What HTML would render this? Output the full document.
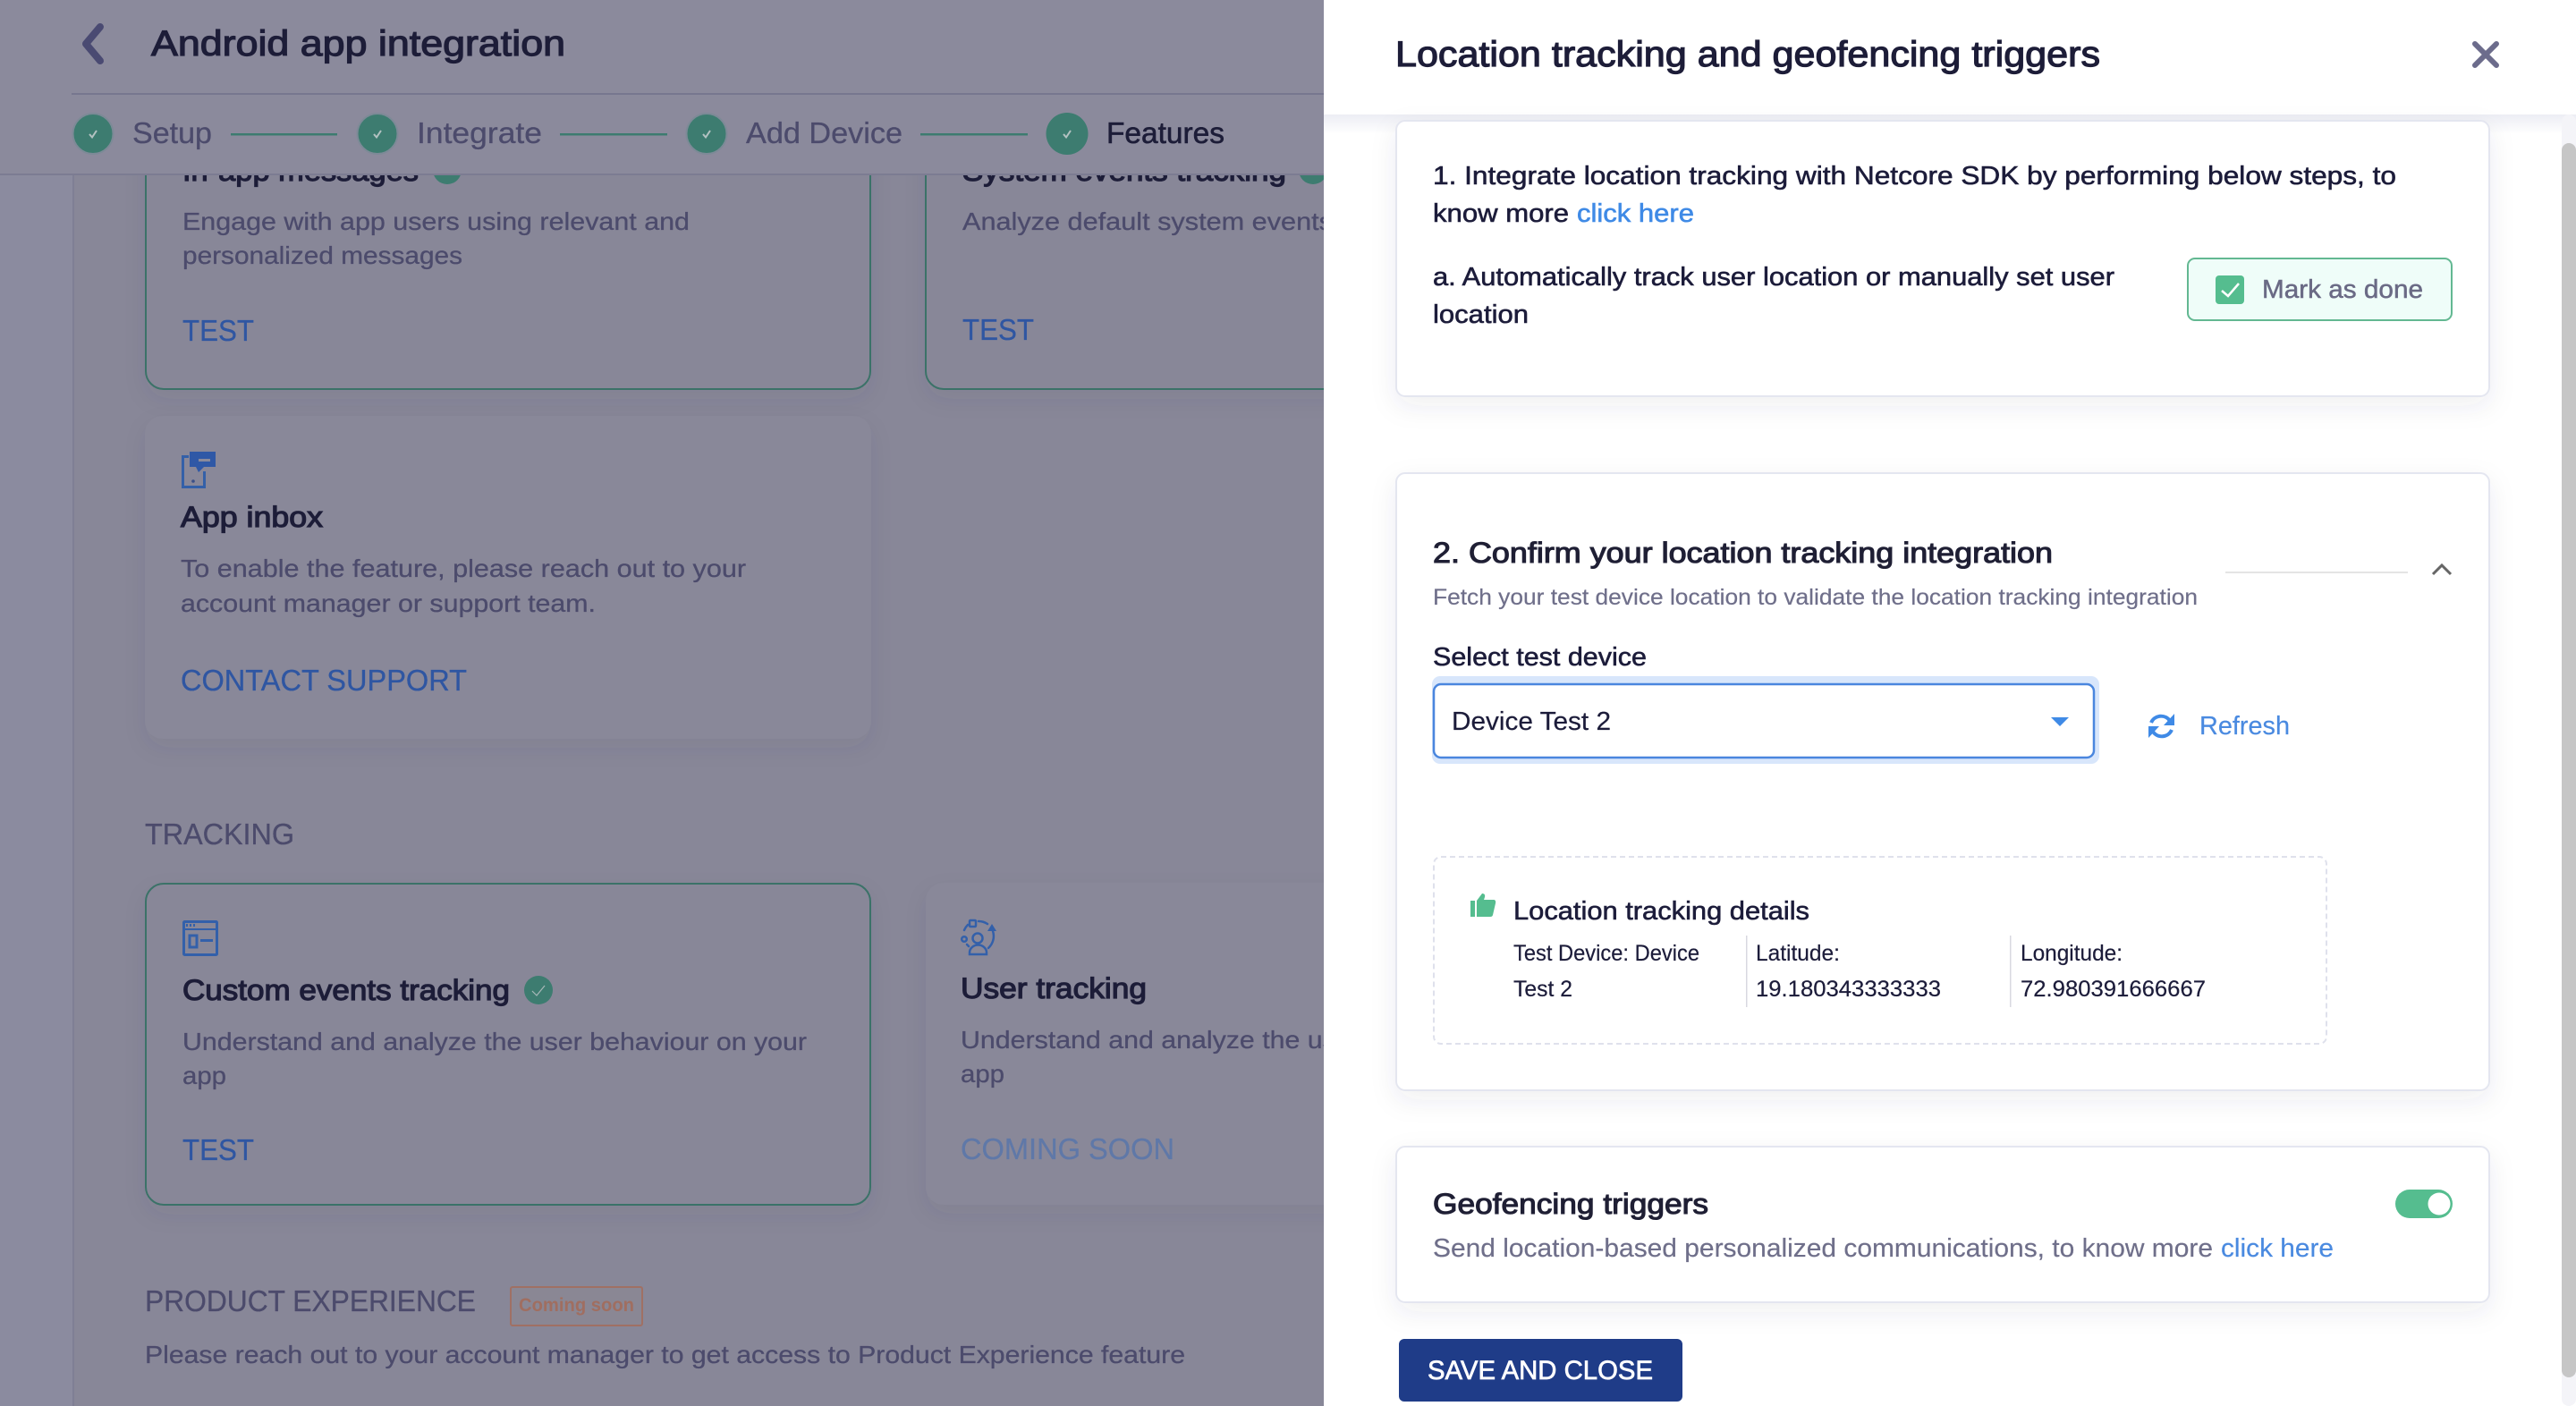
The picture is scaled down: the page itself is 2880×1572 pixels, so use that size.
<!DOCTYPE html>
<html><head><meta charset="utf-8">
<style>
html,body{margin:0;padding:0;width:2880px;height:1572px;overflow:hidden;background:#888798}
svg{display:block}
text{font-family:"Liberation Sans",sans-serif}
.h{font-size:28px;fill:#4c4b6c;stroke:#4c4b6c;stroke-width:.3px}
.t{font-size:32px;fill:#1d1d38;stroke:#1d1d38;stroke-width:1.2px}
.l{font-size:33px;fill:#2f56a2;stroke:#2f56a2;stroke-width:.3px}
.s{font-size:33px;fill:#4c4b6c;stroke:#4c4b6c;stroke-width:.3px}
.d{font-size:29px;fill:#1c1c3a;stroke:#1c1c3a;stroke-width:.6px}
.g{fill:#6f6f8a;stroke:#6f6f8a;stroke-width:.2px}
</style></head><body>
<svg width="2880" height="1572" viewBox="0 0 2880 1572" xmlns="http://www.w3.org/2000/svg">
<defs>
<filter id="sh" x="-10%" y="-10%" width="120%" height="130%"><feDropShadow dx="0" dy="10" stdDeviation="12" flood-color="#3a3a55" flood-opacity=".08"/></filter>
<filter id="sw" x="-10%" y="-10%" width="120%" height="130%"><feDropShadow dx="0" dy="10" stdDeviation="14" flood-color="#30305a" flood-opacity=".08"/></filter>
<linearGradient id="hg" x1="0" y1="0" x2="0" y2="1"><stop offset="0" stop-color="#ecedf4"/><stop offset="1" stop-color="#fff"/></linearGradient>
</defs>

<!-- left background -->
<rect width="1480" height="1572" fill="#888798"/>
<rect width="81" height="1572" fill="#8b8b9f"/>
<rect x="81" width="2" height="1572" fill="#7f7f95"/>

<!-- cards -->
<rect x="163" y="40" width="810" height="395" rx="20" fill="#888798" stroke="#3a7268" stroke-width="2" filter="url(#sh)"/>
<rect x="1035" y="40" width="810" height="395" rx="20" fill="#888798" stroke="#3a7268" stroke-width="2" filter="url(#sh)"/>
<text x="204" y="202" class="t" textLength="264" lengthAdjust="spacingAndGlyphs">In-app messages</text>
<circle cx="500" cy="190" r="16" fill="#3d7c70"/>
<text x="1076" y="202" class="t" textLength="362" lengthAdjust="spacingAndGlyphs">System events tracking</text>
<circle cx="1468" cy="190" r="16" fill="#3d7c70"/>
<text x="204" y="257" class="h" textLength="567" lengthAdjust="spacingAndGlyphs">Engage with app users using relevant and</text>
<text x="204" y="295" class="h" textLength="313" lengthAdjust="spacingAndGlyphs">personalized messages</text>
<text x="204" y="381" class="l" textLength="80" lengthAdjust="spacingAndGlyphs">TEST</text>
<text x="1076" y="257" class="h" textLength="414" lengthAdjust="spacingAndGlyphs">Analyze default system events</text>
<text x="1076" y="380" class="l" textLength="80" lengthAdjust="spacingAndGlyphs">TEST</text>

<rect x="162" y="465" width="812" height="361" rx="20" fill="#898899" filter="url(#sh)"/>
<path d="M211 510.500H204.500V544.500H228.500V527" fill="none" stroke="#3460a8" stroke-width="3"/>
<path d="M212 505H241V522H228L222 528L219 522H212Z" fill="#2f58a6"/>
<rect x="222" y="513" width="13" height="3" fill="#8a8a9b"/>
<circle cx="216" cy="538" r="1.800" fill="#3a4f88"/>
<text x="202" y="589" class="t" textLength="159" lengthAdjust="spacingAndGlyphs">App inbox</text>
<text x="202" y="645" class="h" textLength="632" lengthAdjust="spacingAndGlyphs">To enable the feature, please reach out to your</text>
<text x="202" y="684" class="h" textLength="464" lengthAdjust="spacingAndGlyphs">account manager or support team.</text>
<text x="202" y="772" class="l" textLength="320" lengthAdjust="spacingAndGlyphs">CONTACT SUPPORT</text>

<text x="162" y="944" class="s" textLength="167" lengthAdjust="spacingAndGlyphs">TRACKING</text>

<rect x="163" y="988" width="810" height="359" rx="20" fill="#888798" stroke="#3a7268" stroke-width="2" filter="url(#sh)"/>
<g fill="none" stroke="#3360aa" stroke-width="3">
<rect x="205.500" y="1030.500" width="37" height="37" rx="1"/>
<path d="M205 1039H243" stroke-width="2"/>
<path d="M208 1034.500H218" stroke-dasharray="2 2" stroke-width="3"/>
<rect x="212" y="1046" width="8" height="13"/>
<path d="M224 1051.500H238"/>
</g>
<text x="204" y="1118" class="t" textLength="366" lengthAdjust="spacingAndGlyphs">Custom events tracking</text>
<circle cx="602" cy="1107" r="16" fill="#3d7c70"/>
<path d="M595 1108L600 1113L609 1102" fill="none" stroke="#a8b8b8" stroke-width="1.200"/>
<text x="204" y="1174" class="h" textLength="698" lengthAdjust="spacingAndGlyphs">Understand and analyze the user behaviour on your</text>
<text x="204" y="1212" class="h" textLength="49" lengthAdjust="spacingAndGlyphs">app</text>
<text x="204" y="1297" class="l" textLength="80" lengthAdjust="spacingAndGlyphs">TEST</text>

<rect x="1035" y="987" width="810" height="360" rx="20" fill="#898899" filter="url(#sh)"/>
<g fill="none" stroke="#3360aa" stroke-width="2.500" stroke-linecap="round">
<path d="M1094 1030A18 18 0 0 1 1104 1033M1110 1041A18 18 0 0 1 1105 1060M1078 1040A18 18 0 0 1 1082 1034M1081 1056L1083 1058"/>
<circle cx="1093" cy="1049" r="5.500"/>
<path d="M1084 1067V1065A9 8 0 0 1 1103 1065V1067Z"/>
<rect x="1084" y="1029" width="7" height="7" rx="1"/>
<circle cx="1078" cy="1050" r="2.800"/>
</g>
<path d="M1109 1033L1114 1041H1104Z" fill="#3360aa"/>
<text x="1074" y="1116" class="t" textLength="208" lengthAdjust="spacingAndGlyphs">User tracking</text>
<text x="1074" y="1172" class="h" textLength="698" lengthAdjust="spacingAndGlyphs">Understand and analyze the user behaviour on your</text>
<text x="1074" y="1210" class="h" textLength="49" lengthAdjust="spacingAndGlyphs">app</text>
<text x="1074" y="1296" class="l" style="fill:#5f78a8;stroke:#5f78a8" textLength="239" lengthAdjust="spacingAndGlyphs">COMING SOON</text>

<text x="162" y="1466" class="s" textLength="370" lengthAdjust="spacingAndGlyphs">PRODUCT EXPERIENCE</text>
<rect x="571" y="1439" width="147" height="43" rx="2" fill="#8a8794" stroke="#a07064" stroke-width="2"/>
<text x="580" y="1466" font-size="21" font-weight="bold" fill="#a06e60" textLength="129" lengthAdjust="spacingAndGlyphs">Coming soon</text>
<text x="162" y="1524" class="h" textLength="1163" lengthAdjust="spacingAndGlyphs">Please reach out to your account manager to get access to Product Experience feature</text>

<!-- left header -->
<rect x="0" y="0" width="1480" height="194" fill="#8b8a9c"/>
<rect x="80" y="104" width="1400" height="2" fill="#77778f"/>
<rect x="0" y="194" width="1480" height="2" fill="#7c7c92"/>
<path d="M112 30L96 49L112 68" fill="none" stroke="#4a4a72" stroke-width="8" stroke-linecap="round" stroke-linejoin="round"/>
<text x="169" y="62" font-size="40" fill="#1d1d38" stroke="#1d1d38" stroke-width="1.200" textLength="463" lengthAdjust="spacingAndGlyphs">Android app integration</text>
<g fill="#3d7c70" stroke="#7d8a97" stroke-width="2">
<circle cx="104" cy="149.500" r="22.500"/><circle cx="422" cy="149.500" r="22.500"/><circle cx="790" cy="149.500" r="22.500"/>
</g>
<circle cx="1193" cy="149.500" r="23.500" fill="#3d7c70"/>
<g fill="none" stroke="#b4c2c2" stroke-width="2">
<path d="M100 150L103 153.500L108 146M418 150L421 153.500L426 146M786 150L789 153.500L794 146M1189 150L1192 153.500L1197 146"/>
</g>
<g fill="#3d7c70">
<rect x="258" y="149" width="119" height="2.500"/><rect x="626" y="149" width="120" height="2.500"/><rect x="1029" y="149" width="120" height="2.500"/>
</g>
<text x="148" y="160" font-size="33" fill="#4c4b6c" stroke="#4c4b6c" stroke-width=".3" textLength="89" lengthAdjust="spacingAndGlyphs">Setup</text>
<text x="466" y="160" font-size="33" fill="#4c4b6c" stroke="#4c4b6c" stroke-width=".3" textLength="140" lengthAdjust="spacingAndGlyphs">Integrate</text>
<text x="834" y="160" font-size="33" fill="#4c4b6c" stroke="#4c4b6c" stroke-width=".3" textLength="175" lengthAdjust="spacingAndGlyphs">Add Device</text>
<text x="1237" y="160" font-size="33" fill="#1d1d38" stroke="#1d1d38" stroke-width=".6" textLength="132" lengthAdjust="spacingAndGlyphs">Features</text>

<!-- right panel -->
<rect x="1480" y="0" width="1400" height="1572" fill="#fff"/>
<rect x="1480" y="128" width="1400" height="22" fill="url(#hg)"/>
<text x="1560" y="74" font-size="40" fill="#1d1d38" stroke="#1d1d38" stroke-width="1.200" textLength="788" lengthAdjust="spacingAndGlyphs">Location tracking and geofencing triggers</text>
<path d="M2767 49L2791 73M2791 49L2767 73" fill="none" stroke="#6c6c8c" stroke-width="6" stroke-linecap="round"/>

<!-- scrollbar -->
<rect x="2864" y="128" width="16" height="1444" rx="8" fill="#f4f4f8"/>
<rect x="2864" y="160" width="16" height="1380" rx="8" fill="#c6c6c6"/>

<!-- card 1 -->
<rect x="1561" y="135" width="1222" height="308" rx="10" fill="#fff" stroke="#e4e6f0" stroke-width="2" filter="url(#sw)"/>
<text x="1602" y="206" class="d" textLength="1077" lengthAdjust="spacingAndGlyphs">1. Integrate location tracking with Netcore SDK by performing below steps, to</text>
<text x="1602" y="248" class="d" textLength="152" lengthAdjust="spacingAndGlyphs">know more</text>
<text x="1763" y="248" class="d" style="fill:#3f8ae6;stroke:#3f8ae6" textLength="131" lengthAdjust="spacingAndGlyphs">click here</text>
<text x="1602" y="319" class="d" textLength="762" lengthAdjust="spacingAndGlyphs">a. Automatically track user location or manually set user</text>
<text x="1602" y="361" class="d" textLength="107" lengthAdjust="spacingAndGlyphs">location</text>
<rect x="2446" y="289" width="295" height="69" rx="8" fill="#effdf9" stroke="#63b892" stroke-width="2"/>
<rect x="2477" y="308" width="32" height="32" rx="4" fill="#55bd8f"/>
<path d="M2484 325L2491 331L2503 317" fill="none" stroke="#fff" stroke-width="2.500"/>
<text x="2529" y="333" font-size="29" fill="#6a6a85" stroke="#6a6a85" stroke-width=".5" textLength="180" lengthAdjust="spacingAndGlyphs">Mark as done</text>

<!-- card 2 -->
<rect x="1561" y="529" width="1222" height="690" rx="10" fill="#fff" stroke="#e4e6f0" stroke-width="2" filter="url(#sw)"/>
<text x="1602" y="629" font-size="32" fill="#1f1f34" stroke="#1f1f34" stroke-width="1.100" textLength="693" lengthAdjust="spacingAndGlyphs">2. Confirm your location tracking integration</text>
<rect x="2488" y="639" width="204" height="2" fill="#e4e4e4"/>
<path d="M2720 642L2730 632L2740 642" fill="none" stroke="#666" stroke-width="3"/>
<text x="1602" y="676" font-size="25" class="g" textLength="855" lengthAdjust="spacingAndGlyphs">Fetch your test device location to validate the location tracking integration</text>
<text x="1602" y="744" class="d" textLength="239" lengthAdjust="spacingAndGlyphs">Select test device</text>
<rect x="1601" y="756" width="746" height="98" rx="9" fill="#d8e6fb"/>
<rect x="1603" y="765" width="738" height="82" rx="8" fill="#fff" stroke="#4a86de" stroke-width="2.500"/>
<text x="1623" y="816" font-size="29" fill="#1c1c3a" stroke="#1c1c3a" stroke-width=".2" textLength="178" lengthAdjust="spacingAndGlyphs">Device Test 2</text>
<path d="M2293 802H2313L2303 812Z" fill="#3f8ae6"/>
<g fill="none" stroke="#3f8ae6" stroke-width="4">
<path d="M2405 808A12 12 0 0 1 2426 806"/>
<path d="M2428 816A12 12 0 0 1 2407 818"/>
</g>
<path d="M2431 798V811H2419Z M2402 825V812H2414Z" fill="#3f8ae6"/>
<text x="2459" y="821" font-size="29" fill="#4a8ae0" stroke="#4a8ae0" stroke-width=".2" textLength="101" lengthAdjust="spacingAndGlyphs">Refresh</text>

<rect x="1603" y="958" width="998" height="209" rx="8" fill="#fff" stroke="#dfe1ec" stroke-width="2" stroke-dasharray="6 4"/>
<path d="M1644 1007H1649V1025H1644Z M1651 1007L1657 999C1660 999 1660.500 1001 1660 1003L1659 1006H1670C1672 1006 1672.500 1008 1672 1010L1669 1023C1668.500 1024.500 1667.500 1025 1666 1025H1651Z" fill="#55bd8f"/>
<text x="1692" y="1028" class="d" textLength="331" lengthAdjust="spacingAndGlyphs">Location tracking details</text>
<text x="1692" y="1074" font-size="25" fill="#1c1c3a" stroke="#1c1c3a" stroke-width=".2" textLength="208" lengthAdjust="spacingAndGlyphs">Test Device: Device</text>
<text x="1692" y="1114" font-size="25" fill="#1c1c3a" stroke="#1c1c3a" stroke-width=".2" textLength="66" lengthAdjust="spacingAndGlyphs">Test 2</text>
<rect x="1952" y="1046" width="1.500" height="80" fill="#d8d8e0"/>
<rect x="2247" y="1046" width="1.500" height="80" fill="#d8d8e0"/>
<text x="1963" y="1074" font-size="25" fill="#1c1c3a" stroke="#1c1c3a" stroke-width=".2" textLength="94" lengthAdjust="spacingAndGlyphs">Latitude:</text>
<text x="1963" y="1114" font-size="25" fill="#1c1c3a" stroke="#1c1c3a" stroke-width=".2" textLength="207" lengthAdjust="spacingAndGlyphs">19.180343333333</text>
<text x="2259" y="1074" font-size="25" fill="#1c1c3a" stroke="#1c1c3a" stroke-width=".2" textLength="114" lengthAdjust="spacingAndGlyphs">Longitude:</text>
<text x="2259" y="1114" font-size="25" fill="#1c1c3a" stroke="#1c1c3a" stroke-width=".2" textLength="207" lengthAdjust="spacingAndGlyphs">72.980391666667</text>

<!-- card 3 -->
<rect x="1561" y="1282" width="1222" height="174" rx="10" fill="#fff" stroke="#e4e6f0" stroke-width="2" filter="url(#sw)"/>
<text x="1602" y="1357" font-size="32" fill="#1f1f34" stroke="#1f1f34" stroke-width="1.100" textLength="308" lengthAdjust="spacingAndGlyphs">Geofencing triggers</text>
<rect x="2678" y="1330" width="64" height="32" rx="16" fill="#55bd8f"/>
<circle cx="2727" cy="1346" r="12.500" fill="#fff"/>
<text x="1602" y="1405" font-size="29" class="g" textLength="872" lengthAdjust="spacingAndGlyphs">Send location-based personalized communications, to know more</text>
<text x="2483" y="1405" font-size="29" fill="#4a8ae0" stroke="#4a8ae0" stroke-width=".2" textLength="126" lengthAdjust="spacingAndGlyphs">click here</text>

<!-- save -->
<rect x="1564" y="1497" width="317" height="70" rx="6" fill="#1f3c88"/>
<text x="1596" y="1542" font-size="30" fill="#fff" stroke="#fff" stroke-width=".7" textLength="252" lengthAdjust="spacingAndGlyphs">SAVE AND CLOSE</text>
</svg>
</body></html>
